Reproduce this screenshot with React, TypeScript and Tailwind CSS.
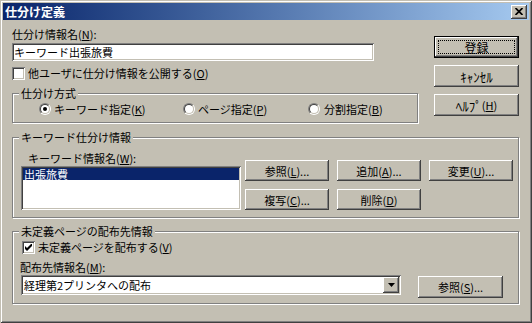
import React from 'react';

// classic 3D edges
const raised =
  'shadow-[inset_-1px_-1px_#404040,inset_1px_1px_#ffffff,inset_-2px_-2px_#808080,inset_2px_2px_#c3bfb3]';
const sunken =
  'shadow-[inset_1px_1px_#808080,inset_-1px_-1px_#ffffff,inset_2px_2px_#404040,inset_-2px_-2px_#c3bfb3]';
const etched = 'border border-[#808080] shadow-[inset_1px_1px_#ffffff,1px_1px_#ffffff]';

function U({ children }: { children: React.ReactNode }) {
  return <span className="underline underline-offset-[1px] decoration-1">{children}</span>;
}

function Btn({ children, className = '' }: { children: React.ReactNode; className?: string }) {
  return (
    <button className={`flex items-center justify-center bg-[#c3bfb3] text-[11px] leading-none pt-px ${raised} ${className}`}>
      {children}
    </button>
  );
}

function Radio({ checked }: { checked?: boolean }) {
  return (
    <span className="w-[12px] h-[12px] rounded-full border border-t-[#808080] border-l-[#808080] border-b-white border-r-white shrink-0">
      <span className="flex items-center justify-center w-full h-full rounded-full bg-white border border-t-[#404040] border-l-[#404040] border-b-[#c3bfb3] border-r-[#c3bfb3]">
        {checked && <span className="w-[4px] h-[4px] rounded-full bg-black" />}
      </span>
    </span>
  );
}

function Check({ checked }: { checked?: boolean }) {
  return (
    <span className={`w-[13px] h-[13px] bg-white shrink-0 flex items-center justify-center ${sunken}`}>
      {checked && (
        <svg width="7" height="7" viewBox="0 0 7 7">
          <polygon points="0,2 2,4 7,-1 7,2 2,7 0,5" fill="black" />
        </svg>
      )}
    </span>
  );
}

function GroupLabel({ children }: { children: React.ReactNode }) {
  return <span className="-mt-[8px] ml-[6px] px-[2px] w-fit bg-[#c3bfb3] h-[14px]">{children}</span>;
}

export default function App() {
  return (
    <div className="w-[532px] h-[323px] bg-[#c3bfb3] p-[3px] flex flex-col font-['Noto_Sans_CJK_JP',sans-serif] text-[11px] leading-[14px] text-black select-none shadow-[inset_1px_1px_#c3bfb3,inset_-1px_-1px_#404040,inset_2px_2px_#ffffff,inset_-2px_-2px_#808080]">
      {/* title bar */}
      <div className="h-[17px] flex items-center justify-between pl-[2px] pr-[2px] bg-linear-to-r from-[#0a246a] to-[#a6caf0]">
        <span className="text-white font-bold text-[12px] leading-none">仕分け定義</span>
        <button className={`w-[16px] h-[14px] bg-[#c3bfb3] flex items-center justify-center ${raised}`}>
          <svg width="8" height="7" viewBox="0 0 8 7">
            <path d="M0.5 0 L7.5 7 M7.5 0 L0.5 7" stroke="black" strokeWidth="1.7" />
          </svg>
        </button>
      </div>

      <div className="flex flex-col pl-[9px] pr-[10px]">
        {/* top section */}
        <div className="flex">
          <div className="w-[406px] pt-[7px] flex flex-col">
            <span className="h-[14px]">
              仕分け情報名(<U>N</U>):
            </span>
            <div className={`mt-[2px] h-[18px] w-[362px] bg-white pl-[2px] flex items-center ${sunken}`}>
              キーワード出張旅費
            </div>
            <div className="mt-[5px] h-[14px] flex items-center gap-[3px]">
              <Check />
              <span>
                他ユーザに仕分け情報を公開する(<U>O</U>)
              </span>
            </div>
            <div className={`mt-[13px] h-[30px] flex flex-col ${etched}`}>
              <GroupLabel>仕分け方式</GroupLabel>
              <div className="mt-[2px] h-[14px] pl-[26px] flex items-center">
                <div className="w-[144px] flex items-center gap-[3px]">
                  <Radio checked />
                  <span>
                    キーワード指定(<U>K</U>)
                  </span>
                </div>
                <div className="w-[125px] flex items-center gap-[3px]">
                  <Radio />
                  <span>
                    ページ指定(<U>P</U>)
                  </span>
                </div>
                <div className="flex items-center gap-[4px]">
                  <Radio />
                  <span>
                    分割指定(<U>B</U>)
                  </span>
                </div>
              </div>
            </div>
          </div>

          <div className="ml-[16px] w-[85px] pt-[16px] flex flex-col gap-[7px]">
            <button className={`relative h-[22px] w-[85px] flex items-center justify-center bg-[#c3bfb3] border border-black text-[12px] leading-none pt-px ${raised}`}>
              <span className="absolute inset-[3px] border border-dotted border-black" />
              登録
            </button>
            <Btn className="h-[22px] w-[85px] text-[13px]">ｷｬﾝｾﾙ</Btn>
            <Btn className="h-[22px] w-[85px] text-[13px]">
              ﾍﾙﾌﾟ
              <span className="text-[11px]">
                (<U>H</U>)
              </span>
            </Btn>
          </div>
        </div>

        {/* keyword group */}
        <div className={`mt-[14px] h-[81px] flex flex-col ${etched}`}>
          <GroupLabel>キーワード仕分け情報</GroupLabel>
          <div className="flex items-end">
            <div className="ml-[8px] flex flex-col">
              <span className="mt-[7px] ml-[7px] h-[14px]">
                キーワード情報名(<U>W</U>):
              </span>
              <div className={`mt-[1px] h-[44px] w-[220px] bg-white p-[2px] ${sunken}`}>
                <div className="h-[12px] bg-[#0a246a] text-white leading-[12px] pl-px">出張旅費</div>
              </div>
            </div>
            <div className="ml-[4px] grid grid-cols-[84px_84px_84px] grid-rows-[21px_21px] gap-[8px]">
              <Btn>
                参照(<U>L</U>)...
              </Btn>
              <Btn>
                追加(<U>A</U>)...
              </Btn>
              <Btn>
                変更(<U>U</U>)...
              </Btn>
              <Btn>
                複写(<U>C</U>)...
              </Btn>
              <Btn>
                削除(<U>D</U>)
              </Btn>
            </div>
          </div>
        </div>

        {/* undefined pages group */}
        <div className={`mt-[13px] h-[73px] flex flex-col ${etched}`}>
          <GroupLabel>未定義ページの配布先情報</GroupLabel>
          <div className="mt-[2px] ml-[9px] h-[14px] flex items-center gap-[3px]">
            <Check checked />
            <span>
              未定義ページを配布する(<U>V</U>)
            </span>
          </div>
          <span className="mt-[6px] ml-[7px] h-[14px]">
            配布先情報名(<U>M</U>):
          </span>
          <div className="mt-px ml-[8px] flex items-start">
            <div className={`h-[20px] w-[380px] bg-white pl-[3px] pr-[2px] flex items-center justify-between ${sunken}`}>
              <span>経理第2プリンタへの配布</span>
              <span className={`w-[16px] h-[16px] bg-[#c3bfb3] flex items-center justify-center ${raised}`}>
                <svg width="7" height="4" viewBox="0 0 7 4">
                  <polygon points="0,0 7,0 3.5,4" fill="black" />
                </svg>
              </span>
            </div>
            <Btn className="ml-[17px] mt-px h-[22px] w-[85px]">
              参照(<U>S</U>)...
            </Btn>
          </div>
        </div>
      </div>
    </div>
  );
}
